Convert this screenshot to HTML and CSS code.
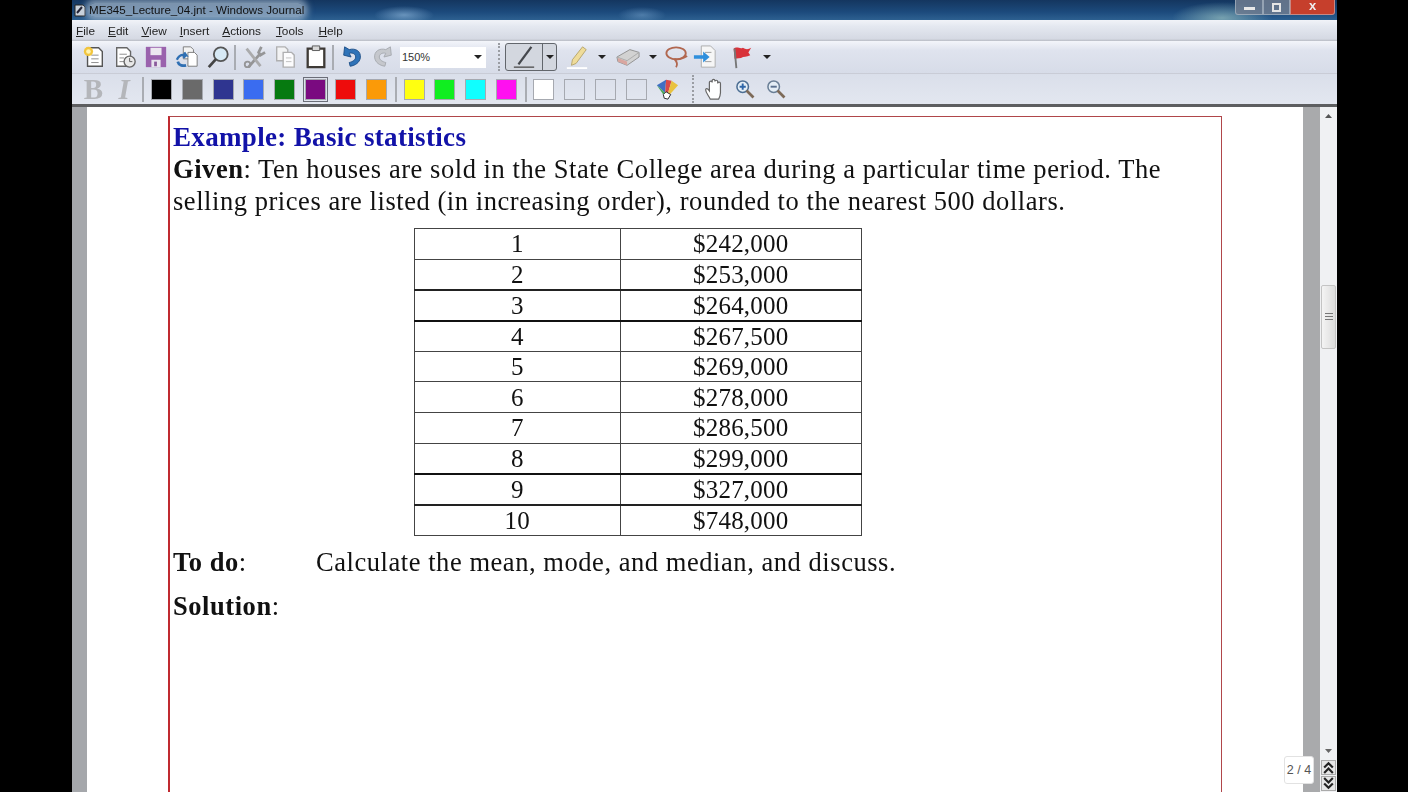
FILE: index.html
```html
<!DOCTYPE html>
<html lang="en">
<head>
<meta charset="UTF-8" />
<title>ME345_Lecture_04.jnt - Windows Journal</title>
<link rel="stylesheet" href="styles.css">
</head>
<body>
  <div class="window">
    <div class="titlebar">
      <svg class="app-icon" viewBox="0 0 12 14"><path d="M1 2h8l2 2v9H1z" fill="#c9d2dc" stroke="#222"/><path d="M3 10l5-6" stroke="#223" stroke-width="2"/></svg>
      <span class="title">ME345_Lecture_04.jnt - Windows Journal</span>
      <div class="win-controls">
        <div class="win-btn win-min"><span class="min-glyph"></span></div>
        <div class="win-btn win-max"><span class="max-glyph"></span></div>
        <div class="win-btn win-close">x</div>
      </div>
    </div>

    <div class="menubar">
      <span class="menu-item"><u>F</u>ile</span>
      <span class="menu-item"><u>E</u>dit</span>
      <span class="menu-item"><u>V</u>iew</span>
      <span class="menu-item"><u>I</u>nsert</span>
      <span class="menu-item"><u>A</u>ctions</span>
      <span class="menu-item menu-late"><u>T</u>ools</span>
      <span class="menu-item menu-late"><u>H</u>elp</span>
    </div>

    <div class="toolbar toolbar-main">
      <div class="tool"><svg viewBox="0 0 26 26"><path d="M6 3h12l4 4v16H6z" fill="#fff" stroke="#555" stroke-width="1.5"/><path d="M10 11h8M10 15h8M10 19h8" stroke="#888"/><circle cx="7" cy="7" r="5" fill="#f2c53d"/><circle cx="7" cy="7" r="2.500" fill="#fff3b0"/></svg></div>
      <div class="tool"><svg viewBox="0 0 26 26"><path d="M4 3h11l4 4v16H4z" fill="#fff" stroke="#666" stroke-width="1.5"/><path d="M7 10h8M7 14h5M7 18h5" stroke="#888"/><circle cx="18" cy="18" r="6" fill="#e8e8e8" stroke="#666" stroke-width="1.5"/><path d="M18 14v4h3" stroke="#555" fill="none"/></svg></div>
      <div class="tool"><svg viewBox="0 0 26 26"><path d="M2 2h22v22H2z" fill="#9a62ad"/><path d="M7 3h12v8H7z" fill="#ece8f0"/><path d="M8 16h10v8H8z" fill="#e8e4ee"/><path d="M11 18h3v5h-3z" fill="#8a5a9c"/></svg></div>
      <div class="tool"><svg viewBox="0 0 26 26"><path d="M9 2h8l3 3v10H9z" fill="#f4f4f4" stroke="#777"/><path d="M14 8h7l3 3v12H14z" fill="#fff" stroke="#777"/><path d="M2 16c2-5 6-6 10-5l-2-3M12 11l-3 3" fill="none" stroke="#2f6fb3" stroke-width="2.5"/><path d="M3 18c1 4 5 5 9 4" fill="none" stroke="#2f6fb3" stroke-width="3"/></svg></div>
      <div class="tool"><svg viewBox="0 0 26 26"><circle cx="16" cy="10" r="7.500" fill="#d7e9f5" stroke="#555" stroke-width="2"/><path d="M11 15L3 24" stroke="#444" stroke-width="3"/></svg></div>
      <span class="sep"></span>
      <div class="tool tool-dim"><svg viewBox="0 0 26 26"><path d="M21 2l-3 6 2 3 5-3M7 24l13-15" stroke="#8d8d8d" stroke-width="3" fill="none"/><path d="M5 4l15 19" stroke="#a5a5a5" stroke-width="3"/><circle cx="6" cy="21" r="3" fill="none" stroke="#8d8d8d" stroke-width="2"/></svg></div>
      <div class="tool tool-dim"><svg viewBox="0 0 26 26"><path d="M4 2h9l3 3v12H4z" fill="#f4f4f4" stroke="#aaa" stroke-width="1.5"/><path d="M11 8h9l3 3v13H11z" fill="#fff" stroke="#aaa" stroke-width="1.5"/><path d="M14 14h6M14 18h6" stroke="#bbb"/></svg></div>
      <div class="tool"><svg viewBox="0 0 26 26"><path d="M4 4h18v20H4z" fill="#fff" stroke="#3e3a36" stroke-width="2.500"/><path d="M9 1h8v5H9z" fill="#d8d8d8" stroke="#555"/></svg></div>
      <span class="sep"></span>
      <div class="tool"><svg viewBox="0 0 26 26"><path d="M10 5c7-2 13 2 12 9-1 5-5 8-11 9l-1-4c4-1 7-3 7-6 0-3-3-5-7-4l2 4-8-2 1-9z" fill="#2f73b8" stroke="#1d4f88"/></svg></div>
      <div class="tool tool-dim"><svg viewBox="0 0 26 26"><path d="M16 5C9 3 3 7 4 14c1 5 5 8 11 9l1-4c-4-1-7-3-7-6 0-3 3-5 7-4l-2 4 8-2-1-9z" fill="#c2c5c9" stroke="#9fa3a8"/></svg></div>
      <div class="zoom-combo"><span>150%</span><i class="arrow"></i></div>
      <span class="grip grip-main"></span>
      <div class="pen-btn">
        <div class="pen-face"><svg viewBox="0 0 26 26"><path d="M21 2L7 21" stroke="#45484d" stroke-width="2.500"/><path d="M2 24h22" stroke="#555" stroke-width="1.5"/></svg></div>
        <div class="pen-drop"><i class="arrow"></i></div>
      </div>
      <div class="tool tool-drop"><svg viewBox="0 0 26 26"><path d="M19 2l4 3L12 20l-5 2 1-6z" fill="#efdc9a" stroke="#b5a46a"/><path d="M2 25h22" stroke="#fff" stroke-width="2"/></svg><i class="arrow"></i></div>
      <div class="tool tool-drop"><svg viewBox="0 0 26 26"><path d="M1 13L15 5l10 3v5L12 22 2 18z" fill="#d2d2d2" stroke="#8f8f8f"/><path d="M1 13l11 4 13-9" fill="none" stroke="#aaa"/><path d="M2 14l10 4v4L2 18z" fill="#d9a6a0"/></svg><i class="arrow"></i></div>
      <div class="tool tool-lasso"><svg viewBox="0 0 26 26"><ellipse cx="12" cy="9" rx="10.500" ry="6.500" fill="none" stroke="#b1674f" stroke-width="2"/><path d="M10 15c3 1 9 0 14-3M10 15c3 3 4 6 2 9" fill="none" stroke="#b1674f" stroke-width="2"/></svg></div>
      <div class="tool tool-insert"><svg viewBox="0 0 26 26"><path d="M9 1h10l5 5v18H9z" fill="#f6f6f6" stroke="#aaa"/><path d="M13 8h7M13 18h7" stroke="#999"/><path d="M1 11h10V7l7 6-7 6v-4H1z" fill="#2f8fdc"/></svg></div>
      <div class="tool tool-flag"><svg viewBox="0 0 26 26"><path d="M5 4c4-3 7 1 10-1 3 2 6 2 9 0l-3 5 2 3c-4 2-7 1-10 3l-7 1z" fill="#d8323a"/><path d="M6 4l2 21" stroke="#777" stroke-width="2"/></svg></div>
      <i class="arrow arrow-flag"></i>
    </div>

    <div class="toolbar toolbar-format">
      <div class="tool letter letter-b">B</div>
      <div class="tool letter letter-i">I</div>
      <span class="sep"></span>
      <div class="tool"><span class="swatch swatch-black"></span></div>
      <div class="tool"><span class="swatch swatch-gray"></span></div>
      <div class="tool"><span class="swatch swatch-navy"></span></div>
      <div class="tool"><span class="swatch swatch-blue"></span></div>
      <div class="tool"><span class="swatch swatch-green"></span></div>
      <div class="tool tool-active"><span class="swatch swatch-purple"></span></div>
      <div class="tool"><span class="swatch swatch-red"></span></div>
      <div class="tool"><span class="swatch swatch-orange"></span></div>
      <span class="sep"></span>
      <div class="tool"><span class="swatch swatch-yellow"></span></div>
      <div class="tool"><span class="swatch swatch-lime"></span></div>
      <div class="tool"><span class="swatch swatch-cyan"></span></div>
      <div class="tool"><span class="swatch swatch-magenta"></span></div>
      <span class="sep"></span>
      <div class="tool"><span class="swatch swatch-white"></span></div>
      <div class="tool"><span class="swatch swatch-empty"></span></div>
      <div class="tool"><span class="swatch swatch-empty"></span></div>
      <div class="tool"><span class="swatch swatch-empty"></span></div>
      <div class="tool"><svg viewBox="0 0 26 26"><path d="M2 9L12 3l-1 14z" fill="#3f6fc4"/><path d="M12 3l6 1-4 14-3-1z" fill="#d84a4a"/><path d="M18 4l7 5-9 10-2-1z" fill="#e9c23f"/><path d="M2 9l9 8-2 2z" fill="#4aa85a"/><path d="M9 19l3-3 5 3-3 5-4-1z" fill="#fff" stroke="#222"/></svg></div>
      <span class="grip grip-format"></span>
      <div class="tool"><svg viewBox="0 0 22 26"><path d="M7 24c-2-4-5-7-5-10 0-2 2-2 4 1V6c0-2 3-2 3 0V4c0-2 3-2 3 0v1c0-2 3-2 3 0v2c0-2 3-2 3 0v10c0 3-1 5-2 7z" fill="#fff" stroke="#666" stroke-width="1.3"/></svg></div>
      <div class="tool tool-lens"><svg viewBox="0 0 26 26"><circle cx="10" cy="10" r="7.500" fill="#e4eef6" stroke="#4d6f94" stroke-width="2"/><path d="M6 10h8M10 6v8" stroke="#2e66a8" stroke-width="2.500"/><path d="M15 15l9 9" stroke="#7d6a58" stroke-width="3.500"/></svg></div>
      <div class="tool tool-lens"><svg viewBox="0 0 26 26"><circle cx="10" cy="10" r="7.500" fill="#e4eef6" stroke="#6a7f96" stroke-width="2"/><path d="M6 10h8" stroke="#5a7190" stroke-width="2.500"/><path d="M15 15l9 9" stroke="#7d6a58" stroke-width="3.500"/></svg></div>
    </div>

    <div class="workspace">
      <div class="desk">
        <div class="sheet">
          <h1 class="heading">Example: Basic statistics</h1>
          <p class="given"><b>Given</b>: Ten houses are sold in the State College area during a particular time period. The selling prices are listed (in increasing order), rounded to the nearest 500 dollars.</p>
          <table class="prices">
            <tr><td>1</td><td>$242,000</td></tr>
            <tr class="row-heavy"><td>2</td><td>$253,000</td></tr>
            <tr class="row-dark"><td>3</td><td>$264,000</td></tr>
            <tr><td>4</td><td>$267,500</td></tr>
            <tr><td>5</td><td>$269,000</td></tr>
            <tr><td>6</td><td>$278,000</td></tr>
            <tr><td>7</td><td>$286,500</td></tr>
            <tr class="row-dark"><td>8</td><td>$299,000</td></tr>
            <tr class="row-heavy"><td>9</td><td>$327,000</td></tr>
            <tr><td>10</td><td>$748,000</td></tr>
          </table>
          <p class="todo"><span class="todo-label"><b>To do</b>:</span><span>Calculate the mean, mode, and median, and discuss.</span></p>
          <p class="solution"><b>Solution</b>:</p>
        </div>
      </div>
      <div class="gutter"></div>
      <div class="scrollbar">
        <svg class="scroll-arrow" viewBox="0 0 9 6"><path d="M1 5l3.500-4 3.500 4z" fill="#555"/></svg>
        <div class="scroll-track">
          <div class="scroll-thumb"><span class="thumb-lines"></span></div>
        </div>
        <svg class="scroll-arrow" viewBox="0 0 9 6"><path d="M1 1l3.500 4 3.500-4z" fill="#666"/></svg>
        <div class="page-btn"><svg viewBox="0 0 12 12"><path d="M2 6l4-4 4 4M2 11l4-4 4 4" fill="none" stroke="#222" stroke-width="2"/></svg></div>
        <div class="page-btn"><svg viewBox="0 0 12 12"><path d="M2 1l4 4 4-4M2 6l4 4 4-4" fill="none" stroke="#222" stroke-width="2"/></svg></div>
      </div>
      <div class="page-tip">2 / 4</div>
    </div>
  </div>
</body>
</html>
```

FILE: styles.css
```css
* {
  box-sizing: border-box;
}
html, body {
  margin: 0;
  height: 100%;
  overflow: hidden;
}
body {
  background: #000;
  font-family: 'Liberation Sans', Arial, sans-serif;
}
.window {
  margin-left: 72px;
  width: 1265px;
  height: 792px;
  display: flex;
  flex-direction: column;
  background: #d9deea;
  filter: blur(0.45px);
}

/* title bar */
.titlebar {
  height: 20px;
  display: flex;
  align-items: center;
  padding-left: 2px;
  background:
    radial-gradient(ellipse 30px 9px at 332px 15px, rgba(150,190,225,.6), transparent),
    radial-gradient(ellipse 24px 8px at 570px 15px, rgba(120,165,205,.5), transparent),
    radial-gradient(ellipse 50px 16px at 1150px 18px, rgba(150,190,190,.7), transparent),
    linear-gradient(#14365f 0, #1c4a7c 60%, #2d6090 100%);
}
.app-icon {
  width: 12px;
  height: 14px;
  margin-right: 3px;
}
.title {
  font-size: 11.6px;
  line-height: 14px;
  color: #111;
  background: rgba(190,205,220,.6);
  box-shadow: 0 0 6px 4px rgba(190,205,220,.6);
  border-radius: 6px;
}
.win-controls {
  margin-left: auto;
  margin-right: 2px;
  display: flex;
  height: 15px;
  align-self: flex-start;
}
.win-btn {
  display: flex;
  align-items: center;
  justify-content: center;
  border: 1px solid rgba(200,210,220,.5);
  border-top: 0;
  background: rgba(110,125,145,.85);
}
.win-min {
  width: 28px;
  border-radius: 0 0 0 3px;
}
.win-max {
  width: 27px;
}
.win-close {
  width: 45px;
  background: #c63f2c;
  color: #eee;
  font-weight: bold;
  font-size: 13px;
  border-radius: 0 0 3px 0;
  padding-bottom: 3px;
}
.min-glyph {
  width: 11px;
  height: 3px;
  background: #e8e8e8;
  margin-top: 2px;
}
.max-glyph {
  width: 9px;
  height: 9px;
  border: 2px solid #e4e4e4;
}

/* menu */
.menubar {
  height: 21px;
  display: flex;
  align-items: center;
  gap: 13px;
  padding-left: 4px;
  font-size: 11.8px;
  color: #222;
  background: linear-gradient(#f1f3f8 0, #e4e8f0 30%, #d5d9e3 90%, #b9bcc4 100%);
}
.menu-item u {
  text-underline-offset: 1px;
}
.menu-late {
  margin-left: 2px;
}

/* toolbars */
.toolbar {
  height: 33px;
  display: flex;
  align-items: center;
  padding-left: 6px;
}
.toolbar-main {
  background: linear-gradient(#f3f5fa 0, #dfe3ee 30%, #d7dce8 100%);
  border-bottom: 1px solid #c9ccd6;
}
.toolbar-format {
  background: linear-gradient(#dadfea 0, #e3e7f0 100%);
  border-bottom: 3px solid #5d5e60;
}
.tool {
  width: 31px;
  height: 29px;
  flex: none;
  display: flex;
  align-items: center;
  justify-content: center;
}
.toolbar-format .tool {
  width: 30.7px;
}
.tool svg {
  width: 24px;
  height: 24px;
}
.tool-lens svg {
  width: 20px;
  height: 20px;
}
.tool-dim {
  opacity: .9;
}
.tool-drop {
  width: 51px;
  justify-content: flex-start;
  gap: 9px;
  padding-left: 8px;
}
.tool-lasso {
  width: 25px;
  margin-left: 5px;
}
.tool-insert {
  width: 31px;
}
.tool-flag {
  width: 41px;
}
.arrow {
  display: block;
  width: 0;
  height: 0;
  border-left: 4px solid transparent;
  border-right: 4px solid transparent;
  border-top: 4px solid #222;
  flex: none;
}
.arrow-flag {
  margin-left: 2px;
}
.sep {
  width: 2px;
  height: 25px;
  flex: none;
  margin: 0 2px 0 3px;
  background: #a9acb2;
}
.toolbar-main .sep {
  margin: 0 2px 0 1px;
}
.grip {
  width: 2px;
  height: 28px;
  flex: none;
  border-left: 2px dotted #9a9da3;
}
.grip-main {
  margin: 0 5px 0 12px;
}
.grip-format {
  margin: 0 5px 0 10px;
}
.zoom-combo {
  width: 86px;
  height: 21px;
  margin-left: 2px;
  flex: none;
  display: flex;
  align-items: center;
  justify-content: space-between;
  padding: 0 4px 0 2px;
  background: #fff;
  font-size: 11px;
  color: #333;
}
.pen-btn {
  width: 52px;
  height: 28px;
  flex: none;
  display: flex;
  border: 1.5px solid #62666c;
  border-radius: 3px;
  background: #d3d7df;
}
.pen-face {
  flex: 1;
  display: flex;
  align-items: center;
  justify-content: center;
}
.pen-face svg {
  width: 24px;
  height: 24px;
}
.pen-drop {
  width: 14px;
  border-left: 1.5px solid #62666c;
  display: flex;
  align-items: center;
  justify-content: center;
}
.letter {
  font-family: 'Liberation Serif', serif;
  font-weight: bold;
  font-size: 29px;
  color: #b4b6ba;
}
.letter-i {
  font-style: italic;
}
.swatch {
  display: block;
  width: 21px;
  height: 21px;
  border: 1px solid #a6a9b0;
}
.swatch-black { background: #000; }
.swatch-gray { background: #6a6a6a; }
.swatch-navy { background: #2f3590; }
.swatch-blue { background: #3a6cf0; }
.swatch-green { background: #067a10; }
.swatch-purple { background: #7a0a80; }
.swatch-red { background: #ee0c0c; }
.swatch-orange { background: #fb9a08; }
.swatch-yellow { background: #ffff10; }
.swatch-lime { background: #10ee20; }
.swatch-cyan { background: #10ffff; }
.swatch-magenta { background: #ff10f0; }
.swatch-white { background: #fff; }
.swatch-empty { background: transparent; }
.tool-active .swatch {
  outline: 1px solid #6b6e78;
  outline-offset: 1px;
}

/* page area */
.workspace {
  flex: 1;
  min-height: 0;
  position: relative;
  display: flex;
  background: #fff;
}
.desk {
  width: 1231px;
  margin-left: 15px;
  padding: 9px 0 0 81px;
  overflow: hidden;
  box-shadow: -15px 0 0 #a5a7ab;
}
.gutter {
  width: 2px;
  flex: none;
}
.sheet {
  width: 1054px;
  height: 700px;
  padding: 5px 0 0 3px;
  border: 1px solid #b0464a;
  border-left: 2px solid #c02a30;
  border-bottom: 0;
  font-family: 'Liberation Serif', 'Times New Roman', serif;
  font-size: 26.5px;
  letter-spacing: .55px;
  line-height: 32px;
  color: #111;
}
.heading {
  margin: 0;
  font-size: 27px;
  letter-spacing: .33px;
  line-height: 31px;
  color: #1212a8;
}
.given {
  margin: 0;
  width: 1010px;
}
.prices {
  margin: 11px 0 0 241px;
  width: 448px;
  height: 307px;
  border-collapse: collapse;
  table-layout: fixed;
  font-size: 25px;
  letter-spacing: .2px;
}
.prices td {
  border: 1.5px solid #444;
  padding: 0;
  text-align: center;
  line-height: 29px;
  height: 30.6px;
}
.prices td:first-child {
  width: 205.5px;
}
.row-heavy td {
  border-bottom: 2.5px solid #222;
}
.row-dark td {
  border-bottom: 2px solid #111;
}
.todo {
  margin: 10px 0 0;
  display: flex;
}
.todo-label {
  width: 143px;
}
.solution {
  margin: 12px 0 0;
}

/* scrollbar */
.scrollbar {
  width: 17px;
  margin-left: auto;
  flex: none;
  display: flex;
  flex-direction: column;
  align-items: center;
  background: #f0f1f3;
  box-shadow: -17px 0 0 #a9aaac;
}
.scroll-arrow {
  width: 9px;
  height: 6px;
  margin: 6px 0;
  flex: none;
}
.scroll-track {
  flex: 1;
  width: 100%;
  padding-top: 160px;
}
.scroll-thumb {
  height: 64px;
  width: 15px;
  margin-left: 1px;
  display: flex;
  align-items: center;
  justify-content: center;
  background: linear-gradient(90deg, #f4f4f4, #dcdcdc);
  border: 1px solid #c4c4c4;
  border-radius: 2px;
}
.thumb-lines {
  width: 8px;
  height: 8px;
  background: repeating-linear-gradient(#777 0 1px, transparent 1px 3px);
}
.page-btn {
  width: 15px;
  height: 15px;
  flex: none;
  margin-bottom: 1px;
  background: #e6e6e6;
  border: 1px solid #aaa;
}
.page-btn svg {
  display: block;
  width: 13px;
  height: 13px;
}
.page-tip {
  position: absolute;
  right: 23px;
  bottom: 8px;
  width: 30px;
  height: 28px;
  display: flex;
  align-items: center;
  justify-content: center;
  background: #fff;
  border: 1px solid #e2e2e2;
  border-radius: 3px;
  font-size: 12.5px;
  color: #555;
}
```
